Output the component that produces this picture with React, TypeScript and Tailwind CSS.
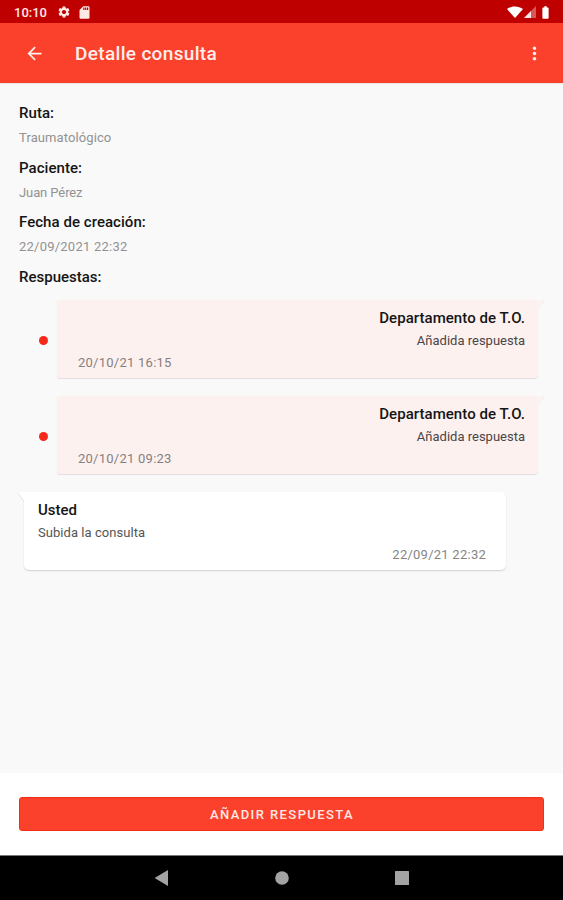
import type { ReactNode } from "react"
import { MdArrowBack, MdBatteryFull, MdMoreVert, MdSdCard, MdSettings } from "react-icons/md"

const details = [
  { label: "Ruta:", value: "Traumatológico", valueClass: "tracking-[0.1px]" },
  { label: "Paciente:", value: "Juan Pérez", valueClass: "tracking-[-0.1px]" },
  { label: "Fecha de creación:", value: "22/09/2021 22:32", valueClass: "tracking-[0.23px]" },
]

const replies = [
  { author: "Departamento de T.O.", message: "Añadida respuesta", date: "20/10/21 16:15" },
  { author: "Departamento de T.O.", message: "Añadida respuesta", date: "20/10/21 09:23" },
]

function StatusBar() {
  return (
    <div className="flex h-[23px] items-center justify-between bg-[#bf0000] pt-px pr-[10px] pl-[14px] text-[#ffe9e6]">
      <div className="flex items-center">
        <span className="w-[43px] pt-px text-[13px] leading-[22px] font-medium">10:10</span>
        <MdSettings className="size-[14px]" />
        <MdSdCard className="ml-[6px] size-[15px]" />
      </div>
      <div className="flex items-center text-white">
        <svg className="h-[12px] w-[16px]" viewBox="0 0 16 12" fill="currentColor">
          <path d="M0 3C4.6-.5 11.4-.5 16 3L8 12z" />
        </svg>
        <svg className="ml-px h-[12px] w-[12px]" viewBox="0 0 12 12" fill="currentColor">
          <path d="M0 12 12 0v12z" opacity=".35" />
          <path d="M0 12 7 5v7z" opacity=".85" />
        </svg>
        <MdBatteryFull className="ml-[2px] size-[15px]" />
      </div>
    </div>
  )
}

function AppBar() {
  return (
    <header className="flex h-[60px] items-center bg-[#fb412b] pr-[18px] pl-[24px] text-[#ffeeeb] shadow-[0_1px_1px_rgba(0,0,0,0.08)]">
      <button aria-label="Volver">
        <MdArrowBack className="size-[21px]" />
      </button>
      <h1 className="ml-[30px] flex-1 pt-[2px] text-[19px] leading-[24px] font-medium tracking-[0.33px]">Detalle consulta</h1>
      <button aria-label="Más opciones">
        <MdMoreVert className="size-[21px]" />
      </button>
    </header>
  )
}

function Dot() {
  return <span className="mt-[36px] mr-[9px] size-[9px] rounded-full bg-[#f62a1b]" />
}

function ReplyBubble({ children }: { children: ReactNode }) {
  return (
    <div className="relative h-[78px] w-[481px] rounded-b-[3px] bg-[#fdf1ef] px-[13px] pt-[7px] shadow-[0_1px_1px_rgba(0,0,0,0.1)]">
      {/* Tail */}
      <svg className="absolute top-0 -right-[7px] h-[9px] w-[8px]" viewBox="0 0 8 9">
        <path d="M0 0h7.5L1 7.5V9H0z" fill="#fcf4f3" />
        <path d="M7.5.3 1.2 7.7" stroke="#ebe6e5" strokeWidth=".8" />
      </svg>
      {children}
    </div>
  )
}

function OwnBubble({ children }: { children: ReactNode }) {
  return (
    <div className="relative ml-[24px] h-[78px] w-[482px] rounded-[5px] rounded-tl-none bg-white px-[14px] pt-[7px] shadow-[0_1px_1.5px_rgba(0,0,0,0.16)]">
      <svg className="absolute top-0 -left-[7px] h-[10px] w-[8px]" viewBox="0 0 8 10">
        <path d="M8 0H.3L7 9v1h1z" fill="#fff" />
        <path d="M.3.3 6.9 9.3" stroke="#dedede" strokeWidth=".8" />
      </svg>
      {children}
    </div>
  )
}

export default function App() {
  return (
    <div className="flex h-[900px] w-[563px] flex-col overflow-hidden bg-[#f9f9f9] font-['Roboto',sans-serif]">
      <StatusBar />
      <AppBar />

      <main className="flex-1 pt-[18px]">
        <dl className="pl-[19px]">
          {details.map((item) => (
            <div key={item.label} className="h-[54.67px]">
              <dt className="text-[15px] leading-[25px] font-medium tracking-[0.05px] text-[#151515]">{item.label}</dt>
              <dd className={`text-[13px] leading-[23px] text-[#929292] ${item.valueClass}`}>{item.value}</dd>
            </div>
          ))}
        </dl>
        <h2 className="pl-[19px] text-[15px] leading-[25px] font-medium text-[#151515]">Respuestas:</h2>

        <div className="mt-[10px] flex flex-col gap-[18px]">
          {replies.map((reply) => (
            <div key={reply.date} className="flex items-start pl-[39px]">
              <Dot />
              <ReplyBubble>
                <p className="text-right text-[15px] leading-[22px] font-medium tracking-[0.05px] text-[#151515]">{reply.author}</p>
                <p className="text-right text-[13px] leading-[23px] text-[#494545]">{reply.message}</p>
                <p className="pl-[8px] text-[13px] leading-[21px] tracking-[0.25px] text-[#858080]">{reply.date}</p>
              </ReplyBubble>
            </div>
          ))}
          <OwnBubble>
            <p className="text-[15px] leading-[22px] font-medium text-[#151515]">Usted</p>
            <p className="text-[13px] leading-[23px] tracking-[0.05px] text-[#555]">Subida la consulta</p>
            <p className="pr-[6px] text-right text-[13px] leading-[21px] tracking-[0.25px] text-[#858585]">22/09/21 22:32</p>
          </OwnBubble>
        </div>
      </main>

      <footer className="h-[82px] bg-white px-[19px] pt-[24px]">
        <button className="h-[34px] w-full rounded-[3px] border border-[#f42d17] bg-[#fb412b] pt-px pl-px text-[13px] font-medium tracking-[1.42px] text-[#ffe9e5]">
          AÑADIR RESPUESTA
        </button>
      </footer>

      {/* System navigation */}
      <nav className="flex h-[45px] items-center justify-center gap-[106px] border-t border-[#777] bg-black text-[#a3a3a3]">
        <svg className="h-[16px] w-[14px]" viewBox="0 0 14 16" fill="currentColor">
          <path d="M-.5 8 13 0v16z" />
        </svg>
        <svg className="size-[14px]" viewBox="0 0 14 14" fill="currentColor">
          <circle cx="7" cy="7" r="6.8" />
        </svg>
        <svg className="size-[14px]" viewBox="0 0 14 14" fill="currentColor">
          <rect width="14" height="14" rx=".5" />
        </svg>
      </nav>
    </div>
  )
}
